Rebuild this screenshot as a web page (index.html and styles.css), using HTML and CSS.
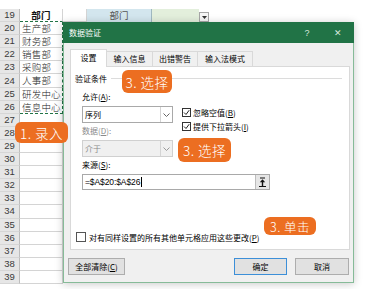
FILE: index.html
```html
<!DOCTYPE html>
<html lang="zh-CN">
<head>
<meta charset="utf-8">
<title>数据验证</title>
<link rel="stylesheet" href="styles.css">
</head>
<body>
<div class="sheet">
  <div class="row">
    <div class="rh">19</div>
    <div class="ca head mq-bottom">部门</div>
    <div class="cb"></div>
    <div class="cc">部门</div>
    <div class="cd"></div>
    <div class="dd"><svg width="5" height="3" viewBox="0 0 5 3"><path d="M0 0H5L2.5 3Z" fill="#333"/></svg></div>
  </div>
  <div class="row"><div class="rh">20</div><div class="ca mq">生产部</div></div>
  <div class="row"><div class="rh">21</div><div class="ca mq">财务部</div></div>
  <div class="row"><div class="rh">22</div><div class="ca mq">销售部</div></div>
  <div class="row"><div class="rh">23</div><div class="ca mq">采购部</div></div>
  <div class="row"><div class="rh">24</div><div class="ca mq">人事部</div></div>
  <div class="row"><div class="rh">25</div><div class="ca mq">研发中心</div></div>
  <div class="row"><div class="rh">26</div><div class="ca mq mq-bottom">信息中心</div></div>
  <div class="row"><div class="rh">27</div><div class="ca"></div></div>
  <div class="row"><div class="rh">28</div><div class="ca"></div></div>
  <div class="row"><div class="rh">29</div><div class="ca"></div></div>
  <div class="row"><div class="rh">30</div><div class="ca"></div></div>
  <div class="row"><div class="rh">31</div><div class="ca"></div></div>
  <div class="row"><div class="rh">32</div><div class="ca"></div></div>
  <div class="row"><div class="rh">33</div><div class="ca"></div></div>
  <div class="row"><div class="rh">34</div><div class="ca"></div></div>
  <div class="row"><div class="rh">35</div><div class="ca"></div></div>
  <div class="row"><div class="rh">36</div><div class="ca"></div></div>
  <div class="row"><div class="rh">37</div><div class="ca"></div></div>
  <div class="row"><div class="rh">38</div><div class="ca"></div></div>
  <div class="row"><div class="rh">39</div><div class="ca"></div></div>
</div>

<div class="dialog">
  <div class="title">
    <span class="title-text">数据验证</span>
    <span class="help">?</span>
    <span class="close">✕</span>
  </div>
  <div class="dbody">
    <div class="tabs">
      <div class="tab active">设置</div>
      <div class="tab t2">输入信息</div>
      <div class="tab t3">出错警告</div>
      <div class="tab t4">输入法模式</div>
    </div>
    <div class="panel">
      <div class="group"><span>验证条件</span><i class="rule"></i></div>
      <div class="fields">
        <div class="leftcol">
          <div class="lbl">允许(<u>A</u>):</div>
          <div class="select">
            <span class="val">序列</span>
            <span class="arrow"><svg width="7" height="4" viewBox="0 0 7 4"><path d="M0.5 0.5L3.5 3.5L6.5 0.5" fill="none" stroke="#666" stroke-width="1"/></svg></span>
          </div>
          <div class="lbl dis">数据(<u>D</u>):</div>
          <div class="select disabled">
            <span class="val">介于</span>
            <span class="arrow"><svg width="7" height="4" viewBox="0 0 7 4"><path d="M0.5 0.5L3.5 3.5L6.5 0.5" fill="none" stroke="#999" stroke-width="1"/></svg></span>
          </div>
        </div>
        <div class="rightcol">
          <div class="chk"><span class="box"><svg width="7" height="7" viewBox="0 0 7 7"><path d="M1 3.5L3 5.5L6.2 1.2" fill="none" stroke="#222" stroke-width="1"/></svg></span>忽略空值(<u>B</u>)</div>
          <div class="chk"><span class="box"><svg width="7" height="7" viewBox="0 0 7 7"><path d="M1 3.5L3 5.5L6.2 1.2" fill="none" stroke="#222" stroke-width="1"/></svg></span>提供下拉箭头(<u>I</u>)</div>
        </div>
      </div>
      <div class="lbl src">来源(<u>S</u>):</div>
      <div class="input">
        <span class="val">=$A$20:$A$26</span><span class="caret"></span>
        <span class="collapse"><svg width="9" height="11" viewBox="0 0 9 11"><path d="M2 1H7" stroke="#111" stroke-width="1"/><path d="M4.5 2.2L1.8 5.2H7.2Z" fill="#111"/><path d="M4.5 5V9" stroke="#111" stroke-width="1.4"/><path d="M1 9.5H8" stroke="#111" stroke-width="1"/></svg></span>
      </div>
      <div class="chk apply"><span class="box"></span>对有同样设置的所有其他单元格应用这些更改(<u>P</u>)</div>
    </div>
    <div class="footer">
      <span class="btn clear">全部清除(<u>C</u>)</span>
      <div class="actions">
        <span class="btn ok">确定</span>
        <span class="btn cancel">取消</span>
      </div>
    </div>
  </div>
</div>

<div class="callout c1">3. 选择</div>
<div class="callout c2">1. 录入</div>
<div class="callout c3">3. 选择</div>
<div class="callout c4">3. 单击</div>
</body>
</html>
```

FILE: styles.css
```css
* { box-sizing: border-box; }

body {
  margin: 0;
  width: 368px;
  height: 289px;
  overflow: hidden;
  background: #fff;
  position: relative;
  font-family: "Noto Sans CJK SC", "Noto Sans", sans-serif;
  color: #000;
}

/* ---------- spreadsheet ---------- */
.sheet {
  padding-top: 9px;
}

.row {
  display: flex;
  height: 13.1px;
}

.rh {
  width: 20px;
  flex: none;
  background: #e6e6e6;
  border-right: 1px solid #bdbdbd;
  border-bottom: 1px solid #d6d6d6;
  font: 9.5px/12px "Liberation Sans", sans-serif;
  color: #3a3a3a;
  display: flex;
  align-items: center;
  justify-content: center;
}

.ca {
  width: 43px;
  flex: none;
  border-right: 1px solid #d4d4d4;
  border-bottom: 1px solid #d4d4d4;
  font-size: 9.5px;
  line-height: 12px;
  padding-left: 2px;
  letter-spacing: 0.2px;
  white-space: nowrap;
  overflow: hidden;
  color: #222;
  font-weight: 300;
}

.ca.head {
  font-weight: 700;
  text-align: center;
  padding-left: 0;
  color: #111;
}

.ca.mq {
  border-right: 1px dashed #217346;
}

.ca.mq-bottom {
  border-bottom: 1px dashed #217346;
}

.cb {
  width: 24px;
  border-right: 1px solid #d4d4d4;
  border-bottom: 1px solid #d4d4d4;
}

.cc {
  width: 65px;
  background: #d3e6ee;
  border-right: 1px solid #9fb8c0;
  font-size: 9.5px;
  line-height: 12px;
  text-align: center;
  color: #555;
}

.cd {
  width: 47px;
  background: #e3efdc;
}

.dd {
  width: 10px;
  height: 10px;
  margin-top: 3px;
  border: 1px solid #a6a6a6;
  background: #f6f6f6;
  display: flex;
  align-items: center;
  justify-content: center;
}

/* ---------- dialog ---------- */
.dialog {
  position: absolute;
  left: 63px;
  top: 22px;
  width: 291px;
  height: 261px;
  background: #f0f0f0;
  border: 1px solid #86bb98;
  border-top: 0;
  box-shadow: 0 1px 8px rgba(0, 0, 0, 0.22);
  display: flex;
  flex-direction: column;
}

.title {
  height: 21px;
  margin: 0 -1px;
  background: #217346;
  color: #fff;
  display: flex;
  align-items: center;
  padding: 0 6px 0 6px;
  font-size: 8px;
}

.title-text {
  flex: 1;
}

.help {
  width: 14px;
  text-align: center;
  font: 9px "Liberation Sans", sans-serif;
  color: #d5e8dc;
}

.close {
  width: 20px;
  margin-left: 14px;
  text-align: center;
  font-size: 9px;
  color: #d5e8dc;
}

.dbody {
  flex: 1;
  padding: 6px 3px 0 6px;
  display: flex;
  flex-direction: column;
}

.tabs {
  display: flex;
  align-items: flex-end;
  height: 17px;
}

.tab {
  height: 15px;
  border: 1px solid #d9d9d9;
  border-bottom: 0;
  margin-left: -1px;
  background: #f0f0f0;
  font-size: 8px;
  line-height: 13px;
  text-align: center;
}

.tab.active {
  width: 37px;
  height: 18px;
  margin-left: 0;
  margin-bottom: -1px;
  background: #fff;
  position: relative;
  z-index: 1;
  line-height: 16px;
}

.tab.t2 { width: 47px; }
.tab.t3 { width: 46px; }
.tab.t4 { width: 56px; }

.panel {
  height: 184px;
  background: #fff;
  border: 1px solid #d9d9d9;
  padding: 6px 0 6px 4px;
  display: flex;
  flex-direction: column;
  font-size: 8px;
}

.group {
  height: 11px;
  display: flex;
  align-items: center;
  line-height: 11px;
}

.rule {
  flex: 1;
  height: 1px;
  background: #dcdcdc;
  margin: 0 7px 0 4px;
}

.fields {
  display: flex;
  margin-top: 7px;
  margin-left: 7px;
}

.leftcol {
  width: 91px;
}

.lbl {
  height: 12px;
  line-height: 12px;
}

.lbl.dis {
  margin-top: 2px;
  color: #8a8a8a;
}

.select {
  margin-top: 3px;
  height: 17px;
  border: 1px solid #a9a9a9;
  background: #fff;
  display: flex;
  align-items: stretch;
}

.select .val {
  flex: 1;
  line-height: 15px;
  padding-left: 2px;
}

.select .arrow {
  width: 12px;
  border-left: 1px solid #d4d4d4;
  display: flex;
  align-items: center;
  justify-content: center;
}

.select.disabled {
  background: #f0f0f0;
  border-color: #d0d0d0;
  color: #8a8a8a;
}

.rightcol {
  margin-left: 9px;
  padding-top: 14px;
}

.chk {
  height: 14px;
  display: flex;
  align-items: center;
  white-space: nowrap;
}

.box {
  width: 9px;
  height: 9px;
  border: 1px solid #333;
  background: #fff;
  margin-right: 2px;
  display: flex;
  align-items: center;
  justify-content: center;
}

.lbl.src {
  margin-top: 2px;
  margin-left: 7px;
}

.input {
  margin-top: 3px;
  margin-left: 7px;
  width: 188px;
  height: 16px;
  border: 1px solid #a9a9a9;
  display: flex;
  align-items: center;
  padding-left: 2px;
}

.input .val {
  font: 8.5px "Liberation Sans", sans-serif;
  letter-spacing: -0.1px;
}

.caret {
  width: 1px;
  height: 10px;
  background: #000;
  margin-left: 1px;
}

.collapse {
  margin-left: auto;
  width: 14px;
  height: 14px;
  background: #e6e6e6;
  border-left: 1px solid #bdbdbd;
  display: flex;
  align-items: center;
  justify-content: center;
}

.chk.apply {
  margin-top: auto;
  margin-left: 1px;
  height: 12px;
}

.chk.apply .box {
  width: 10px;
  height: 10px;
  border-color: #555;
  margin-right: 3px;
}

.footer {
  margin: 8px 1px 0 -2px;
  height: 17px;
  display: flex;
  justify-content: space-between;
}

.actions {
  display: flex;
  gap: 8px;
}

.btn {
  height: 17px;
  border: 1px solid #adadad;
  background: #e1e1e1;
  font-size: 8px;
  line-height: 15px;
  text-align: center;
}

.btn.clear { width: 57px; }
.btn.ok { width: 53px; border-color: #3c8fd8; }
.btn.cancel { width: 54px; }

/* ---------- callouts ---------- */
.callout {
  position: absolute;
  background: #ec6e21;
  color: #fff;
  border-radius: 6px;
  font-size: 13.5px;
  font-weight: 300;
  display: flex;
  align-items: center;
  justify-content: center;
  letter-spacing: 0.5px;
  white-space: nowrap;
}

.c1 { left: 122px; top: 70px; width: 50px; height: 23px; }
.c2 { left: 15px; top: 122px; width: 53px; height: 21px; }
.c3 { left: 178px; top: 138px; width: 53px; height: 24px; }
.c4 { left: 264px; top: 217px; width: 52px; height: 18px; font-size: 12.5px; }
```
